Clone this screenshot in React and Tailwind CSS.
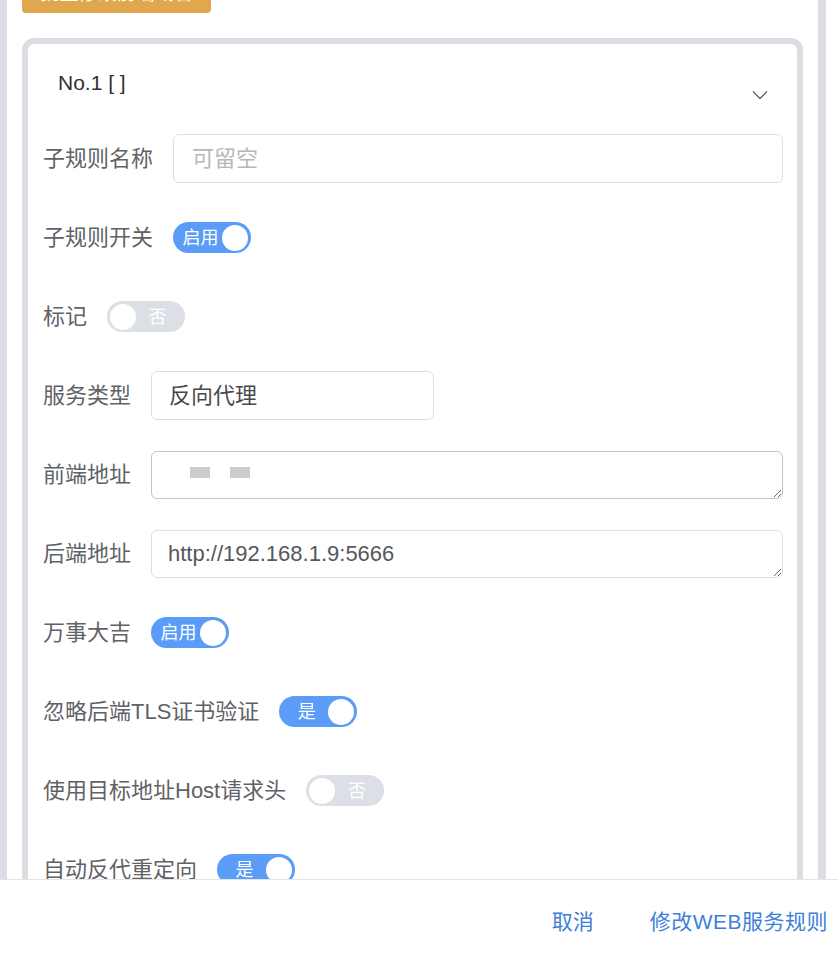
import React from 'react';

const font = { fontFamily: '"Liberation Sans", "Noto Sans CJK SC", sans-serif' };

const Switch = ({ on, text }) => (
  <div
    className={
      on
        ? 'w-[78px] h-[31px] rounded-full bg-[#5a9cf8] flex flex-row items-center shrink-0'
        : 'w-[78px] h-[31px] rounded-full bg-[#dcdfe6] flex flex-row items-center shrink-0'
    }
  >
    {on ? (
      <>
        <span className="flex-1 text-center pl-[6px] text-white text-[18px] leading-none">{text}</span>
        <span className="w-[26px] h-[26px] rounded-full bg-white mr-[3px]" />
      </>
    ) : (
      <>
        <span className="w-[26px] h-[26px] rounded-full bg-white ml-[3px]" />
        <span className="flex-1 text-center pr-[6px] text-white text-[18px] leading-none">{text}</span>
      </>
    )}
  </div>
);

const Row = ({ label, children }) => (
  <div className="flex flex-row items-center h-[49px] gap-[20px]">
    <span className="text-[22px] text-[#5f6266] whitespace-nowrap shrink-0">{label}</span>
    {children}
  </div>
);

export default function App() {
  return (
    <div style={font} className="w-[838px] h-[958px] bg-white flex flex-col overflow-hidden">
      <div className="flex-1 min-h-0 overflow-hidden">
        <div className="w-[826px] h-full border-l-[7px] border-r-[8px] border-[#dcdde2] px-[15px] flex flex-col">
          <div className="-mt-[25px] flex flex-col">
            <button className="w-[189px] h-[38px] shrink-0 rounded-[4px] bg-[#e1a74d] text-white text-[19px] flex items-center justify-center">
              批量修改前端域名
            </button>

            <div className="mt-[25px] border-[6px] border-[#dcdde2] rounded-[12px] bg-white">
              <div className="h-[90px] flex flex-row justify-between items-start pl-[30px] pr-[29px] pt-[25px]">
                <span className="text-[21px] leading-[28px] text-[#303133]">No.1 [ ]</span>
                <svg width="16" height="10" viewBox="0 0 16 10" className="mt-[21px]">
                  <path d="M1 1.5 L8 8.5 L15 1.5" fill="none" stroke="#606266" strokeWidth="1.3" />
                </svg>
              </div>

              <div className="flex flex-col gap-[30px] pl-[15px] pr-[14px] pb-[30px]">
                <Row label="子规则名称">
                  <div className="flex-1 h-[49px] border border-[#dcdfe6] rounded-[6px] flex items-center px-[18px] text-[22px] text-[#b4b7be]">
                    可留空
                  </div>
                </Row>
                <Row label="子规则开关">
                  <Switch on text="启用" />
                </Row>
                <Row label="标记">
                  <Switch text="否" />
                </Row>
                <Row label="服务类型">
                  <div className="w-[283px] h-[49px] border border-[#dcdfe6] rounded-[6px] flex items-center px-[17px] text-[22px] text-[#48494d]">
                    反向代理
                  </div>
                </Row>
                <Row label="前端地址">
                  <div className="flex-1 relative h-[48px]">
                    <textarea
                      readOnly
                      value=""
                      className="w-full h-[48px] border border-[#c0c4cc] rounded-[6px] px-[17px] py-[9px] text-[22px] leading-[28px] text-[#606266] outline-none"
                    />
                    <div className="absolute left-[39px] top-[16px] flex flex-row gap-[20px]">
                      <span className="w-[20px] h-[11px] bg-[#cccccc]" />
                      <span className="w-[20px] h-[11px] bg-[#cccccc]" />
                    </div>
                  </div>
                </Row>
                <Row label="后端地址">
                  <textarea
                    readOnly
                    value="http://192.168.1.9:5666"
                    className="flex-1 h-[48px] border border-[#dcdfe6] rounded-[6px] px-[16px] py-[9px] text-[22px] leading-[28px] text-[#55575c] outline-none"
                  />
                </Row>
                <Row label="万事大吉">
                  <Switch on text="启用" />
                </Row>
                <Row label="忽略后端TLS证书验证">
                  <Switch on text="是" />
                </Row>
                <Row label="使用目标地址Host请求头">
                  <Switch text="否" />
                </Row>
                <Row label="自动反代重定向">
                  <Switch on text="是" />
                </Row>
                <Row label="自动HTTPS跳转">
                  <Switch text="否" />
                </Row>
              </div>
            </div>
          </div>
        </div>
      </div>

      <div className="h-[79px] shrink-0 border-t border-[#e4e4e6] bg-white flex flex-row items-center justify-end gap-[56px] pr-[10px] pt-[6px]">
        <button className="text-[21px] text-[#3d7fd8]">取消</button>
        <button className="text-[21px] tracking-[0.5px] text-[#3d7fd8]">修改WEB服务规则</button>
      </div>
    </div>
  );
}
